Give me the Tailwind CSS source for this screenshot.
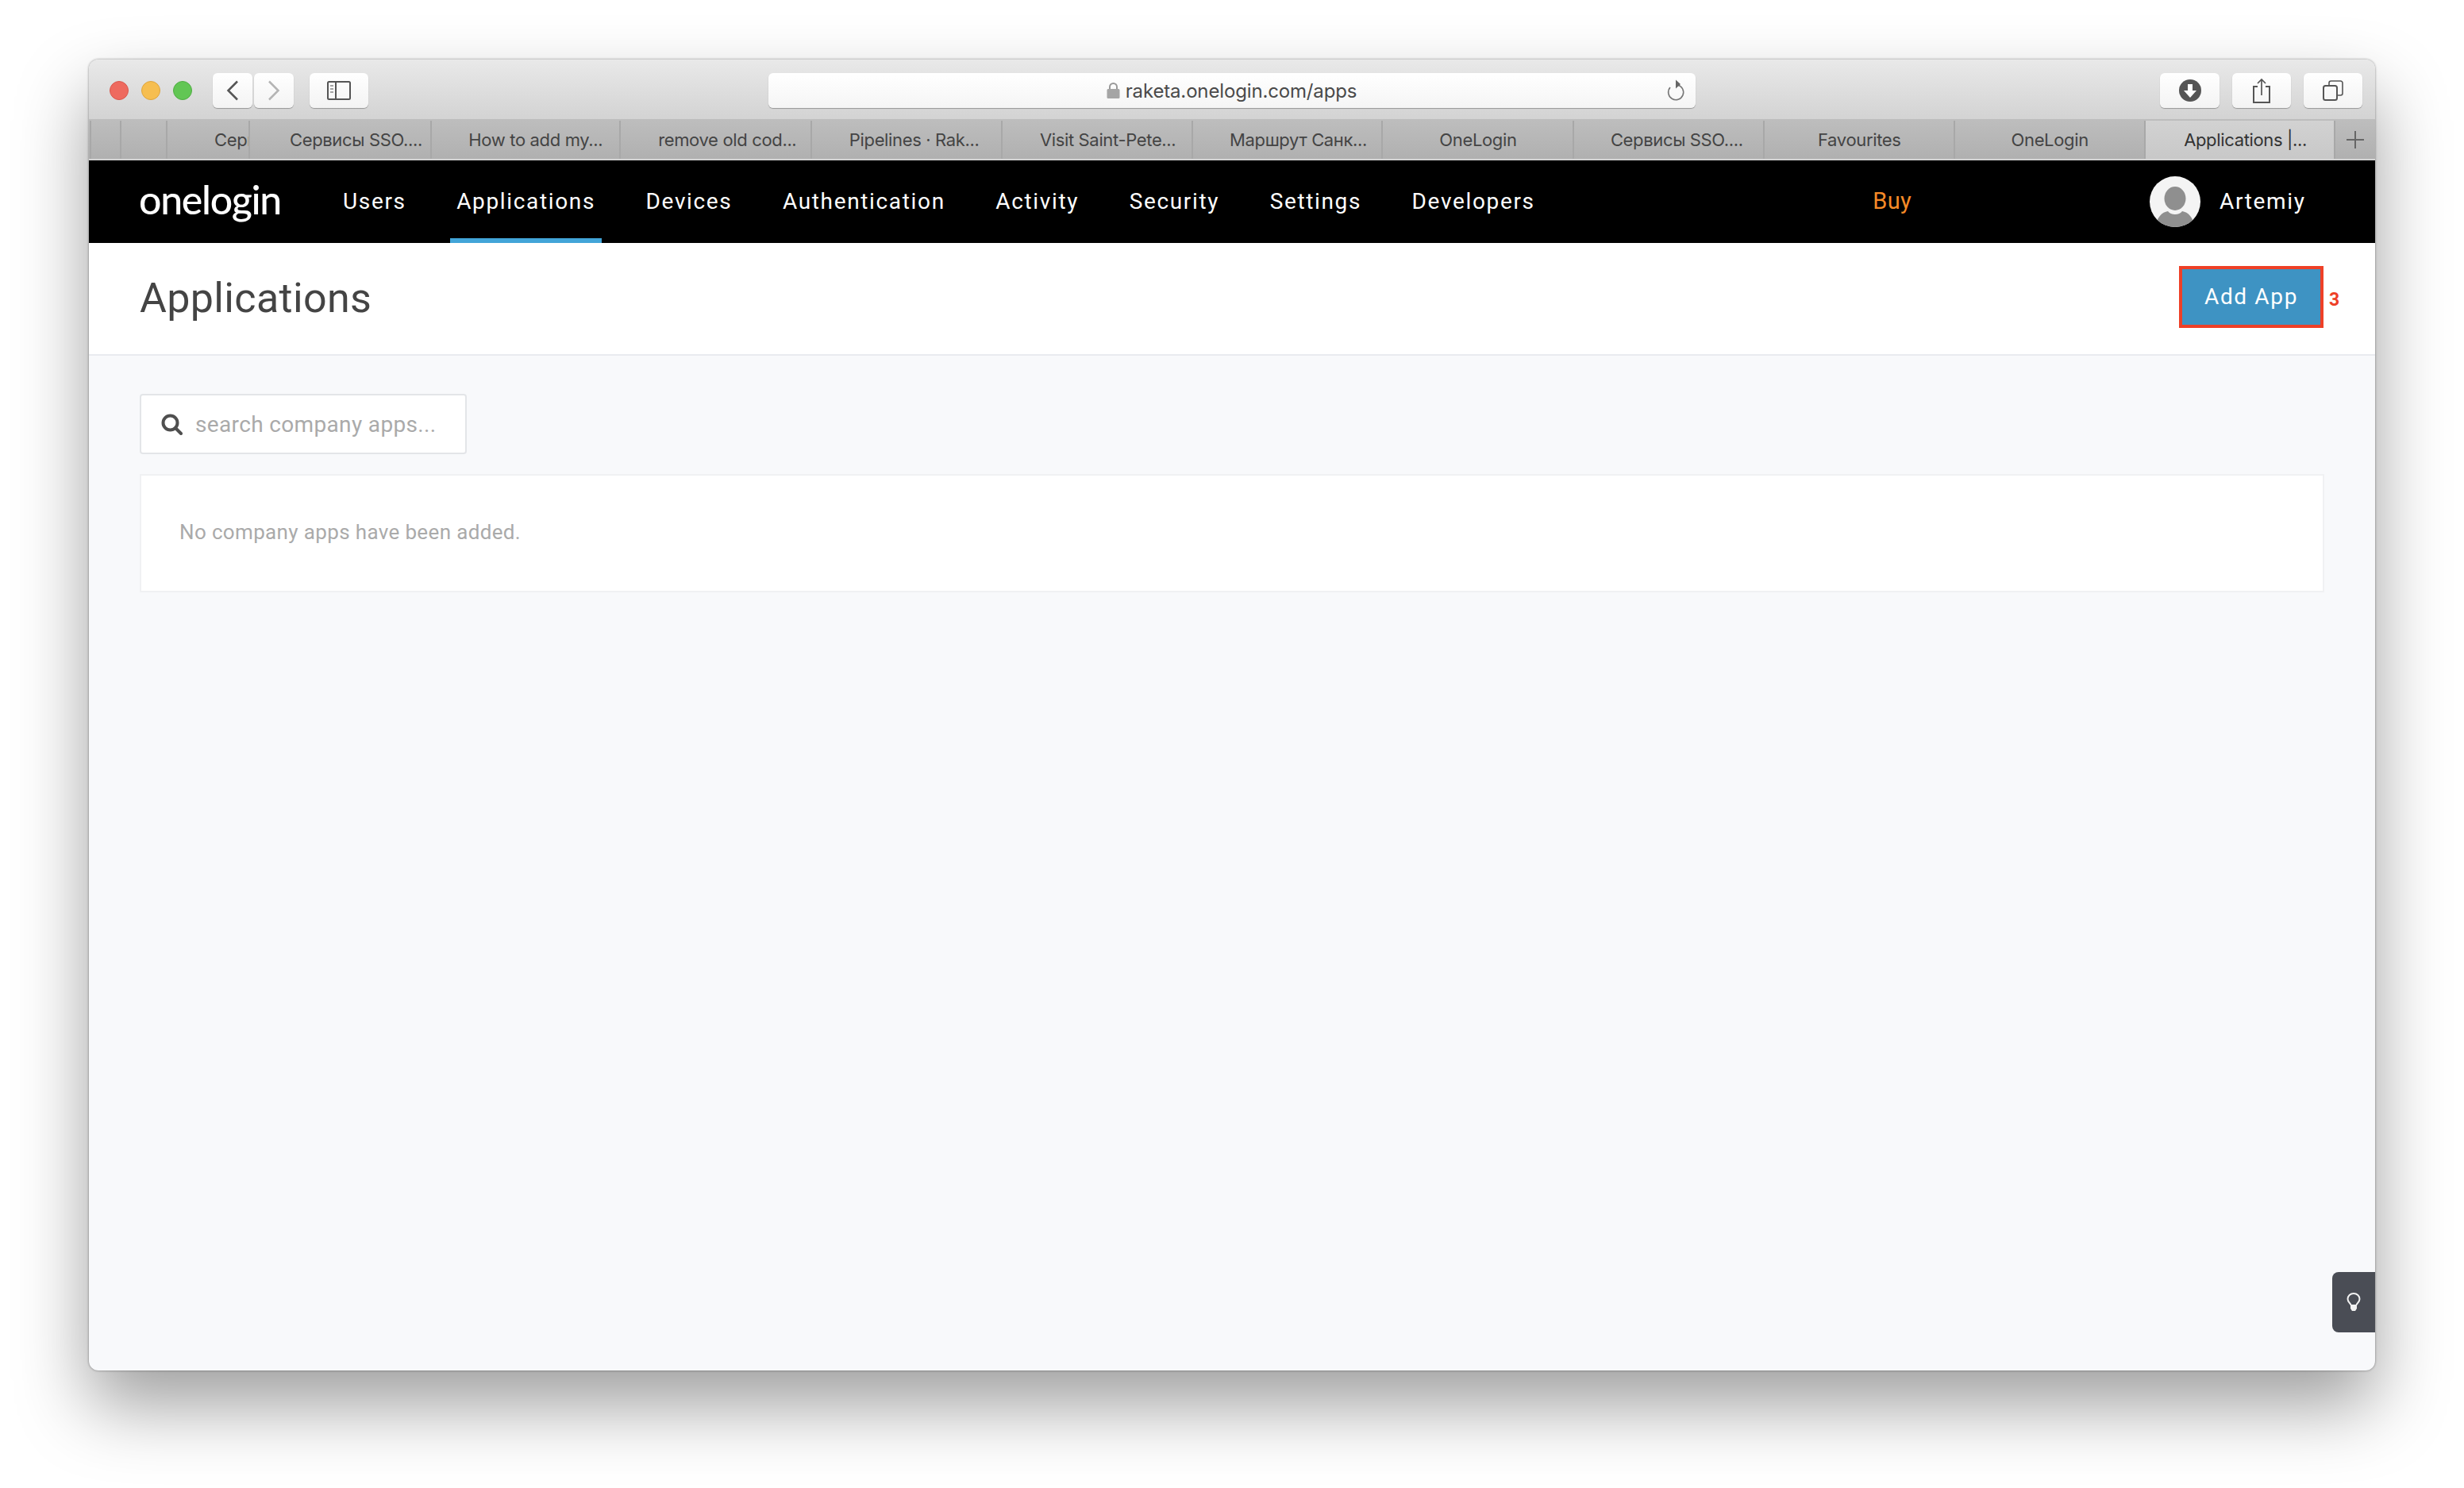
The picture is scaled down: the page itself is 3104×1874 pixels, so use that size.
<!DOCTYPE html>
<html><head><meta charset="utf-8"><script src="https://cdn.jsdelivr.net/npm/@tailwindcss/browser@4"></script></head>
<body class="bg-white w-[3104px] h-[1874px] overflow-hidden font-['Roboto',sans-serif]">
<div class="pt-[75px] pl-[112px]">
<div class="relative w-[2880px] h-[1651px] flex flex-col rounded-[12px] overflow-hidden bg-[#f8f9fb] shadow-[0_44px_90px_rgba(0,0,0,0.38),0_0_3px_rgba(0,0,0,0.45)]">
  <!-- toolbar -->
  <div class="h-[77px] shrink-0 flex items-center pt-[2px] bg-gradient-to-b from-[#e9e9e9] to-[#d3d3d3] border-b-2 border-[#bdbdbd] font-['Inter',sans-serif]">
    <div class="flex gap-[16px] ml-[26px]">
      <span class="w-[24px] h-[24px] rounded-full bg-[#ee6a5f] border border-[#d9584e]"></span>
      <span class="w-[24px] h-[24px] rounded-full bg-[#f6be50] border border-[#dfa53c]"></span>
      <span class="w-[24px] h-[24px] rounded-full bg-[#62c654] border border-[#50ad43]"></span>
    </div>
    <div class="flex gap-[2px] ml-[26px]">
      <div class="w-[50px] h-[44px] rounded-[6px] bg-gradient-to-b from-white to-[#f3f3f3] shadow-[0_1px_1px_rgba(0,0,0,0.3)] flex items-center justify-center">
        <svg width="16" height="26" viewBox="0 0 16 26" fill="none" stroke="#555" stroke-width="2.5"><path d="M14 1.5 2.5 13 14 24.5"/></svg>
      </div>
      <div class="w-[50px] h-[44px] rounded-[6px] bg-gradient-to-b from-white to-[#f3f3f3] shadow-[0_1px_1px_rgba(0,0,0,0.3)] flex items-center justify-center">
        <svg width="16" height="26" viewBox="0 0 16 26" fill="none" stroke="#b4b4b4" stroke-width="2.5"><path d="M2 1.5 13.5 13 2 24.5"/></svg>
      </div>
    </div>
    <div class="ml-[20px] w-[74px] h-[44px] rounded-[6px] bg-gradient-to-b from-white to-[#f3f3f3] shadow-[0_1px_1px_rgba(0,0,0,0.3)] flex items-center justify-center">
      <svg width="30" height="24" viewBox="0 0 30 24" fill="none" stroke="#555" stroke-width="2"><rect x="1" y="1" width="28" height="22" rx="1.5"/><path d="M11 1v22"/><path d="M4 6h4M4 10h4M4 14h4" stroke-width="1.5" stroke="#888"/></svg>
    </div>
    <div class="ml-[504px] w-[1168px] h-[44px] rounded-[6px] bg-gradient-to-b from-white to-[#f5f5f5] shadow-[0_1px_1px_rgba(0,0,0,0.3)] flex items-center">
      <div class="flex-1 flex items-center justify-center gap-[7px] pl-[36px] pt-[3px] text-[24px] text-[#4a4a4a] tracking-[-0.15px]">
        <svg width="17" height="22" viewBox="0 0 17 22" class="mt-[-3px]"><path d="M4 10V6.5a4.5 4.5 0 0 1 9 0V10" fill="none" stroke="#999" stroke-width="2"/><rect x="0.5" y="9" width="16" height="12" rx="1.5" fill="#a5a5a5"/></svg>
        <span>raketa.onelogin.com/apps</span>
      </div>
      <svg class="mr-[13px]" width="24" height="28" viewBox="0 0 24 28" fill="none"><path d="M14.500 7A9.500 9.500 0 1 1 5 10" stroke="#777" stroke-width="1.6"/><path d="M12 0.500 18 6 12 11.500z" fill="#666"/></svg>
    </div>
    <div class="ml-[585px] w-[75px] h-[44px] rounded-[6px] bg-gradient-to-b from-white to-[#f3f3f3] shadow-[0_1px_1px_rgba(0,0,0,0.3)] flex items-center justify-center">
      <svg width="28" height="28" viewBox="0 0 28 28"><circle cx="14" cy="14" r="14" fill="#555"/><path d="M11 6h6v8h5l-8 9-8-9h5z" fill="#fff"/></svg>
    </div>
    <div class="ml-[16px] w-[74px] h-[44px] rounded-[6px] bg-gradient-to-b from-white to-[#f3f3f3] shadow-[0_1px_1px_rgba(0,0,0,0.3)] flex items-center justify-center">
      <svg width="24" height="32" viewBox="0 0 24 32" fill="none" stroke="#555" stroke-width="2"><path d="M7 11H2v20h20V11h-5"/><path d="M12 22V2M7 7l5-5 5 5" stroke-width="1.7"/></svg>
    </div>
    <div class="ml-[16px] w-[74px] h-[44px] rounded-[6px] bg-gradient-to-b from-white to-[#f3f3f3] shadow-[0_1px_1px_rgba(0,0,0,0.3)] flex items-center justify-center">
      <svg width="26" height="26" viewBox="0 0 26 26" fill="none" stroke="#555" stroke-width="2"><rect x="1" y="7" width="17" height="18" rx="2.5"/><path d="M8 7V3.5A2.5 2.5 0 0 1 10.500 1H22.500A2.500 2.500 0 0 1 25 3.500V16.500A2.500 2.500 0 0 1 22.500 19H18" stroke-width="1.600"/></svg>
    </div>
  </div>
  <!-- tabs -->
  <div class="h-[48px] shrink-0 flex bg-gradient-to-b from-[#bdbdbd] to-[#b0b0b0] text-[22px] text-[#444] font-['Inter',sans-serif] tracking-[-0.35px] border-b-2 border-[#d3d3d3] box-content">
    <div class="w-[3px] border-r-2 border-[#a8a8a8]"></div>
    <div class="w-[38px] border-r-2 border-[#a8a8a8]"></div>
    <div class="w-[58px] border-r-2 border-[#a8a8a8]"></div>
    <div class="w-[104px] border-r-2 border-[#a8a8a8] overflow-hidden flex items-center pl-[59px] whitespace-nowrap">Сервисы SSO....</div>
    <div class="w-[229px] border-r-2 border-[#a8a8a8] flex items-center justify-center pl-[40px]">Сервисы SSO....</div>
    <div class="w-[238px] border-r-2 border-[#a8a8a8] flex items-center justify-center pl-[26px]">How to add my...</div>
    <div class="w-[241px] border-r-2 border-[#a8a8a8] flex items-center justify-center pl-[30px]">remove old cod...</div>
    <div class="w-[240px] border-r-2 border-[#a8a8a8] flex items-center justify-center pl-[20px]">Pipelines · Rak...</div>
    <div class="w-[240px] border-r-2 border-[#a8a8a8] flex items-center justify-center pl-[28px]">Visit Saint-Pete...</div>
    <div class="w-[240px] border-r-2 border-[#a8a8a8] flex items-center justify-center pl-[28px]">Маршрут Санк...</div>
    <div class="w-[241px] border-r-2 border-[#a8a8a8] flex items-center justify-center">OneLogin</div>
    <div class="w-[240px] border-r-2 border-[#a8a8a8] flex items-center justify-center pl-[20px]">Сервисы SSO....</div>
    <div class="w-[240px] border-r-2 border-[#a8a8a8] flex items-center justify-center">Favourites</div>
    <div class="w-[240px] border-r-2 border-[#a8a8a8] flex items-center justify-center">OneLogin</div>
    <div class="w-[239px] bg-gradient-to-b from-[#d2d2d2] to-[#c8c8c8] flex items-center justify-center text-[#333] border-r-2 border-[#a8a8a8] pl-[14px]">Applications |...</div>
    <div class="w-[50px] flex items-center justify-center">
      <svg width="24" height="24" viewBox="0 0 24 24" stroke="#666" stroke-width="2"><path d="M12 1v22M1 12h22"/></svg>
    </div>
  </div>
  <!-- nav -->
  <div class="h-[104px] shrink-0 bg-black flex items-stretch text-white text-[28px] tracking-[1.65px] pl-[63px]">
    <div class="w-[183px] flex items-center font-['Lato',sans-serif] font-medium text-[50px] tracking-[-1.3px] leading-none pb-[6px]">onelogin</div>
    <div class="flex ml-[66px] gap-[47.5px]">
      <div class="px-[8px] flex items-center">Users</div>
      <div class="px-[8px] flex items-center border-b-[6px] border-t-[6px] border-t-transparent border-[#42a5d8]">Applications</div>
      <div class="px-[8px] flex items-center">Devices</div>
      <div class="px-[8px] flex items-center">Authentication</div>
      <div class="px-[8px] flex items-center">Activity</div>
      <div class="px-[8px] flex items-center">Security</div>
      <div class="px-[8px] flex items-center">Settings</div>
      <div class="px-[8px] flex items-center">Developers</div>
    </div>
    <div class="ml-auto flex items-center text-[#f58a27] text-[29px] tracking-[0.3px]">Buy</div>
    <div class="ml-[300px] w-[284px] flex items-center gap-[24px] shrink-0">
      <svg width="64" height="64" viewBox="0 0 64 64"><defs><clipPath id="av"><circle cx="32" cy="32" r="32"/></clipPath></defs><circle cx="32" cy="32" r="32" fill="#f4f4f4"/><g clip-path="url(#av)"><ellipse cx="32" cy="28" rx="13.500" ry="15" fill="#8f8f8f"/><path d="M8 64c0-12 8-19 15-20 2 2.500 5 4 9 4s7-1.500 9-4c7 1 15 8 15 20z" fill="#8f8f8f"/></g></svg>
      <span>Artemiy</span>
    </div>
  </div>
  <!-- page header -->
  <div class="h-[142px] shrink-0 bg-white border-b-2 border-[#e9ebef] flex items-center pl-[64px] pr-[65px] justify-between">
    <h1 class="text-[52px] text-[#444] font-normal tracking-[0.35px] mt-[-1px]">Applications</h1>
    <div class="relative mt-[-4px]">
      <button class="w-[182px] h-[78px] bg-[#3e93c3] border-[4px] border-[#ee4027] text-white text-[28px] tracking-[1.65px] flex items-center justify-center">Add App</button>
      <span class="absolute left-[189px] top-[31px] text-[23px] leading-none font-bold text-[#ee4027]">3</span>
    </div>
  </div>
  <!-- content -->
  <div class="flex-1 px-[64px] pt-[48px] flex flex-col gap-[25px]">
    <div class="w-[412px] h-[76px] bg-white border-2 border-[#e3e5e8] rounded-[4px] flex items-center pl-[25px] gap-[16px] text-[28px] text-[#aaa] tracking-[0.35px]">
      <svg width="27" height="27" viewBox="0 0 27 27" fill="none" stroke="#4f4f4f" stroke-width="4"><circle cx="11.500" cy="11.500" r="9"/><path d="M18 18l7 7" stroke-linecap="round"/></svg>
      <span class="pt-[1px]">search company apps...</span>
    </div>
    <div class="w-[2752px] h-[149px] bg-white border-2 border-[#f0f1f3] flex items-center pl-[48px] pb-[3px] text-[26px] text-[#aaa] tracking-[0.35px]">No company apps have been added.</div>
  </div>
  <!-- help tab -->
  <div class="absolute right-0 top-[1527px] w-[54px] h-[76px] bg-[#4a4d55] rounded-l-[8px] flex items-center justify-center">
    <svg width="18" height="24" viewBox="0 0 18 24" fill="none"><path d="M5.500 15.500C4.500 13 1.500 11.500 1.500 8a7.500 7 0 0 1 15 0c0 3.500-3 5-4 7.500" stroke="#f2f2f2" stroke-width="2"/><path d="M5 15h8v5l-2 3H7l-2-3z" fill="#f2f2f2"/></svg>
  </div>
</div>
</div>
</body></html>
